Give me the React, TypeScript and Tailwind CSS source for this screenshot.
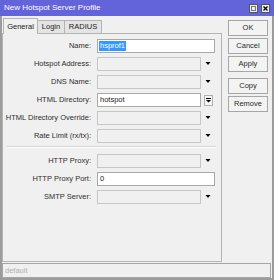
import type { ReactNode } from 'react'

// small black dropdown arrow used by the combo fields
const Arrow = () => (
  <svg width="6" height="4" viewBox="0 0 6 4" className="block">
    <polygon points="0.5,0 5.5,0 3,3" fill="#000" />
  </svg>
)

// arrow with a bar above it, inside a little box (value can be unset)
const UnsetArrow = () => (
  <svg width="9" height="11" viewBox="0 0 9 11" className="block">
    <rect x="0.5" y="0.5" width="8" height="10" fill="#f4f4f4" stroke="#b0b0b0" />
    <rect x="2" y="3" width="5" height="1" fill="#000" />
    <polygon points="2,5 7,5 4.5,7.5" fill="#000" />
  </svg>
)

const Row = ({ label, children }: { label: string; children: ReactNode }) => (
  <div className="flex h-[18px] items-center">
    <div className="w-[88px] text-right text-[#2e2e2e] whitespace-nowrap">{label}</div>
    <div className="ml-[6px] flex items-center">{children}</div>
  </div>
)

const TextField = ({ value, selected }: { value: string; selected?: boolean }) => (
  <div className="flex h-[14px] w-[118px] items-center border border-[#a9a9a9] bg-white pl-[1px]">
    {selected ? (
      <span className="flex h-[10px] items-center bg-[#3399ff] px-[1px] text-white">{value}</span>
    ) : (
      <span className="pl-[1px] text-[#222]">{value}</span>
    )}
  </div>
)

const Combo = ({ value, unset }: { value?: string; unset?: boolean }) => (
  <>
    <div
      className={
        value !== undefined
          ? 'flex h-[14px] w-[104px] items-center border border-[#a9a9a9] bg-white pl-[2px] text-[#222]'
          : 'h-[14px] w-[104px] border border-[#c6c6c6] bg-[#f0f0f0]'
      }
    >
      {value}
    </div>
    <div className="flex w-[14px] justify-center">{unset ? <UnsetArrow /> : <Arrow />}</div>
  </>
)

const Button = ({ children }: { children: ReactNode }) => (
  <div className="flex h-[16px] w-[40px] items-center justify-center border border-[#a6a6a6] bg-[#f3f3f3] text-[#2a2a2a]">
    {children}
  </div>
)

export default function App() {
  return (
    <div className="flex h-[280px] w-[274px] flex-col font-['Liberation_Sans',Arial,sans-serif] text-[7.5px] leading-none">
      <div className="flex h-[16px] items-center justify-between bg-[#6464da] pl-[4px] pr-[4px]">
        <span className="text-[8px] text-white">New Hotspot Server Profile</span>
        <div className="flex gap-[3px] pt-[1px]">
          <div className="flex h-[9px] w-[9px] items-center justify-center border border-[#555] bg-[#ececec]">
            <div className="h-[5px] w-[5px] border border-[#777]" />
          </div>
          <div className="flex h-[9px] w-[9px] items-center justify-center border border-[#555] bg-[#ececec]">
            <svg width="5" height="5" viewBox="0 0 5 5" className="block">
              <path d="M0.5 0.5 L4.5 4.5 M4.5 0.5 L0.5 4.5" stroke="#000" strokeWidth="1.3" />
            </svg>
          </div>
        </div>
      </div>

      <div className="flex flex-1 flex-col border-x-2 border-b-2 border-[#9c9c9c] bg-[#f0f0f0]">
        <div className="flex flex-1">
          <div className="flex w-[220px] flex-col pt-[2px]">
            <div className="flex h-[15px] items-end pl-[1px]">
              <div className="relative z-10 -mb-px flex h-[16px] w-[35px] items-center justify-center border border-b-0 border-[#b4b4b4] bg-[#f0f0f0] text-[#222]">
                General
              </div>
              <div className="flex h-[13px] w-[27px] items-center justify-center border border-l-0 border-b-0 border-[#b4b4b4] bg-[#e4e4e4] text-[#222]">
                Login
              </div>
              <div className="flex h-[13px] w-[37px] items-center justify-center border border-l-0 border-b-0 border-[#b4b4b4] bg-[#e4e4e4] text-[#222]">
                RADIUS
              </div>
            </div>
            <div className="flex flex-1 flex-col border border-[#b4b4b4] pt-[3px]">
              <Row label="Name:">
                <TextField value="hsprof1" selected />
              </Row>
              <Row label="Hotspot Address:">
                <Combo />
              </Row>
              <Row label="DNS Name:">
                <Combo />
              </Row>
              <Row label="HTML Directory:">
                <Combo value="hotspot" unset />
              </Row>
              <Row label="HTML Directory Override:">
                <Combo />
              </Row>
              <Row label="Rate Limit (rx/tx):">
                <Combo />
              </Row>
              <div className="pb-[4px] pl-[4px] pr-[5px] pt-[1px]">
                <div className="h-[2px] border-t border-b border-t-[#d6d6d6] border-b-white" />
              </div>
              <Row label="HTTP Proxy:">
                <Combo />
              </Row>
              <Row label="HTTP Proxy Port:">
                <TextField value="0" />
              </Row>
              <Row label="SMTP Server:">
                <Combo />
              </Row>
            </div>
          </div>

          <div className="ml-[6px] flex flex-col gap-[2px] pt-[4px]">
            <Button>OK</Button>
            <Button>Cancel</Button>
            <Button>Apply</Button>
            <div className="mt-[4px]">
              <Button>Copy</Button>
            </div>
            <Button>Remove</Button>
          </div>
        </div>

        <div className="mr-[1px] mt-[1px] flex h-[15px] items-center border border-[#a6a6a6] pl-[2px] text-[#b0b0b0]">
          default
        </div>
      </div>
    </div>
  )
}
